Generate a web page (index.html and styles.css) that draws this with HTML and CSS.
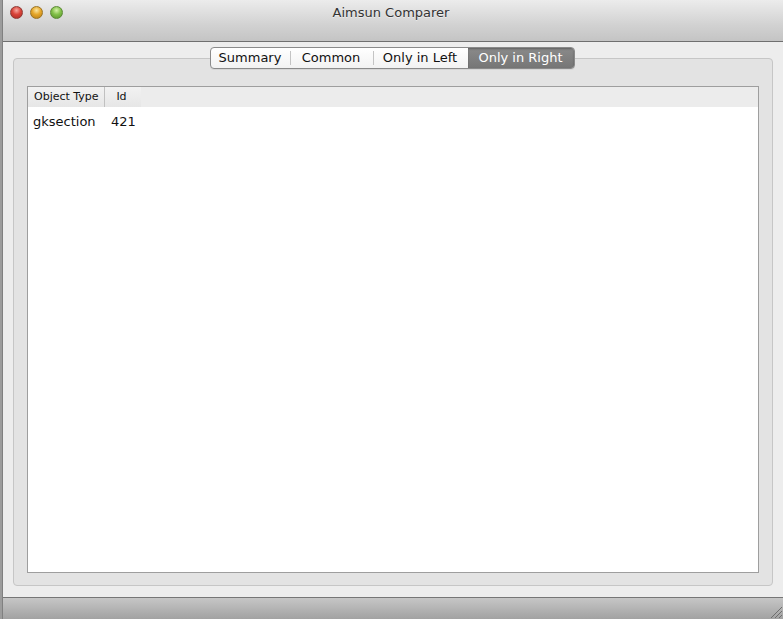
FILE: index.html
```html
<!DOCTYPE html>
<html>
<head>
<meta charset="utf-8">
<link rel="stylesheet" href="styles.css">
</head>
<body>
<div class="window">
  <div class="titlebar">
    <div class="lights">
      <span class="light red"></span>
      <span class="light yellow"></span>
      <span class="light green"></span>
    </div>
    <div class="title">Aimsun Comparer</div>
  </div>
  <div class="content">
    <div class="tabs">
      <div class="tab t1">Summary</div>
      <div class="tab t2">Common</div>
      <div class="tab t3">Only in Left</div>
      <div class="tab t4 active">Only in Right</div>
    </div>
    <div class="group">
      <div class="table">
        <div class="thead">
          <div class="th c1">Object Type</div>
          <div class="th c2">Id</div>
        </div>
        <div class="row">
          <div class="td c1">gksection</div>
          <div class="td c2">421</div>
        </div>
      </div>
    </div>
  </div>
  <div class="statusbar">
    <svg class="grip" width="12" height="12" viewBox="0 0 12 12">
      <line x1="1" y1="12" x2="12" y2="1" stroke="#6e6e6e" stroke-width="1"/>
      <line x1="5" y1="12" x2="12" y2="5" stroke="#6e6e6e" stroke-width="1"/>
      <line x1="9" y1="12" x2="12" y2="9" stroke="#6e6e6e" stroke-width="1"/>
    </svg>
  </div>
</div>
</body>
</html>
```
FILE: styles.css
```css
html, body {
  margin: 0;
  padding: 0;
  background: #9c9c9c;
}
body {
  width: 783px;
  height: 619px;
  overflow: hidden;
  font-family: "DejaVu Sans", "Liberation Sans", sans-serif;
}
.window {
  margin-left: 2px;
  width: 781px;
  height: 619px;
  border-left: 1px solid #808080;
  box-sizing: border-box;
  display: flex;
  flex-direction: column;
  background: #ededed;
}
.titlebar {
  height: 41px;
  flex: none;
  border-bottom: 1px solid #6f6f6f;
  background: linear-gradient(#ececec, #d2d2d2 60%, #c4c4c4);
  position: relative;
  display: flex;
  align-items: flex-start;
  justify-content: center;
}
.lights {
  position: absolute;
  left: 7px;
  top: 6px;
  display: flex;
  gap: 7px;
}
.light {
  width: 13px;
  height: 13px;
  border-radius: 50%;
  box-sizing: border-box;
}
.red {
  background: radial-gradient(circle at 50% 30%, #f7a8a0 0, #d9443a 45%, #a72a22 100%);
  border: 1px solid #8e3a35;
}
.yellow {
  background: radial-gradient(circle at 50% 30%, #fbe6a0 0, #e6a72a 45%, #b57a14 100%);
  border: 1px solid #9a7424;
}
.green {
  background: radial-gradient(circle at 50% 30%, #d6f2a8 0, #83c14a 45%, #558f28 100%);
  border: 1px solid #5b8a36;
}
.title {
  margin-top: 5px;
  margin-left: -4px;
  font-size: 13px;
  color: #333;
  text-shadow: 0 1px 0 rgba(255,255,255,0.5);
}
.content {
  flex: 1;
  padding: 5px 10px 11px 10px;
  display: flex;
  flex-direction: column;
}
.tabs {
  align-self: center;
  margin-left: -2px;
  display: flex;
  height: 22px;
  box-sizing: border-box;
  border: 1px solid #8a8a8a;
  border-radius: 4px;
  background: linear-gradient(#ffffff, #f2f2f2);
  position: relative;
  z-index: 1;
  overflow: hidden;
  box-shadow: 0 1px 0 rgba(0,0,0,0.06);
}
.tab {
  font-size: 13px;
  color: #111;
  line-height: 20px;
  text-align: center;
  box-sizing: border-box;
  position: relative;
}
.tab + .tab::before {
  content: "";
  position: absolute;
  left: 0;
  top: 3px;
  bottom: 3px;
  width: 1px;
  background: #c4c4c4;
}
.t1 { width: 79px; }
.t2 { width: 83px; }
.t3 { width: 95px; }
.t4 { width: 106px; }
.tab.active {
  background: linear-gradient(#8a8a8a, #767676);
  color: #fff;
  box-shadow: inset 0 1px 2px rgba(0,0,0,0.3);
}
.tab.active::before { display: none; }
.group {
  flex: 1;
  margin-top: -11px;
  border: 1px solid #c6c6c6;
  border-radius: 4px;
  background: #e3e3e3;
  padding: 27px 13px 12px 13px;
  display: flex;
  flex-direction: column;
}
.table {
  flex: 1;
  border: 1px solid #9e9e9e;
  background: #fff;
}
.thead {
  height: 20px;
  display: flex;
  background: #ececec;
}
.th {
  font-size: 11px;
  color: #111;
  line-height: 20px;
  box-sizing: border-box;
  background: linear-gradient(#f2f2f2, #e6e6e6);
  position: relative;
}
.th.c1 {
  width: 77px;
  padding-left: 6px;
  border-right: 1px solid #c0c0c0;
}
.th.c2 {
  width: 36px;
  text-align: center;
  padding-right: 3px;
}
.row {
  display: flex;
  height: 28px;
  align-items: center;
}
.td {
  font-size: 13px;
  color: #111;
}
.td.c1 {
  width: 78px;
  padding-left: 5px;
}
.td.c2 {
  padding-left: 0;
}
.statusbar {
  height: 21px;
  flex: none;
  border-top: 1px solid #767676;
  background: linear-gradient(#c6c6c6, #a2a2a2);
  position: relative;
  display: flex;
  justify-content: flex-end;
  align-items: flex-end;
}
.grip {
  margin: 0 1px 1px 0;
}
```
